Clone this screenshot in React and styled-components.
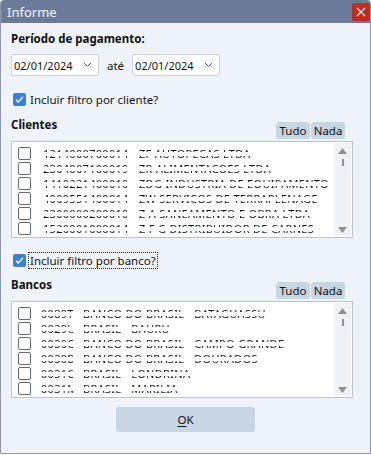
import React, { useState } from "react";
import styled, { createGlobalStyle } from "styled-components";

const GlobalStyle = createGlobalStyle`
  body {
    margin: 0;
    background: #ffffff;
    font-family: "Noto Sans", "Open Sans", sans-serif;
  }
`;

// components
const Window = styled.div`
  width: 371px;
  height: 454px;
  box-sizing: border-box;
  border: 1px solid #8e98aa;
  border-top: none;
  border-radius: 4px 4px 2px 2px;
  background: #eef3fa;
  display: flex;
  flex-direction: column;
  overflow: hidden;
`;

const TitleBar = styled.div`
  height: 23px;
  flex: none;
  background: #6b7a99;
  display: flex;
  align-items: center;
  justify-content: space-between;
  padding: 0 1px 0 7px;
  border-radius: 4px 4px 0 0;
  margin: 0 -1px;
`;

const Title = styled.span`
  color: #f2f4f8;
  font-size: 13px;
`;

const CloseButton = styled.button`
  width: 18px;
  height: 18px;
  padding: 0;
  border: none;
  border-radius: 2px;
  background: #c42b1c;
  display: flex;
  align-items: center;
  justify-content: center;
  margin-top: 1px;
`;

const Body = styled.div`
  display: flex;
  flex-direction: column;
  padding: 7px 17px 0 10px;
`;

const Heading = styled.div`
  font-weight: 700;
  font-size: 11.5px;
  color: #111;
  line-height: 16px;
`;

const DateRow = styled.div`
  display: flex;
  align-items: center;
  gap: 8px;
  margin-top: 7px;
`;

const DateBox = styled.div`
  width: 88px;
  height: 22px;
  box-sizing: border-box;
  background: #fff;
  border: 1px solid #c9d0da;
  border-radius: 2px;
  display: flex;
  align-items: center;
  justify-content: space-between;
  padding: 0 6px 0 2px;
  font-size: 11px;
  color: #111;
`;

const Label = styled.span`
  font-size: 11.5px;
  color: #111;
`;

const CheckRow = styled.label`
  display: flex;
  align-items: center;
  gap: 3px;
  margin-top: ${p => p.$top}px;
  margin-left: 2px;
  font-size: 11.5px;
  color: #111;
`;

const CheckText = styled.span`
  line-height: 15px;
  padding: 0 1px;
  outline: ${p => (p.$focus ? "1px dotted #222" : "none")};
`;

const Check = styled.span`
  width: 13px;
  height: 13px;
  box-sizing: border-box;
  border-radius: 2px;
  flex: none;
  display: flex;
  align-items: center;
  justify-content: center;
  background: ${p => (p.$on ? "#3b7fd6" : "#fff")};
  border: 1px solid ${p => (p.$on ? "#3b7fd6" : "#5d6880")};
`;

const SectionHead = styled.div`
  display: flex;
  justify-content: space-between;
  align-items: flex-start;
  margin-top: ${p => p.$top}px;
  height: 24px;
`;

const ButtonGroup = styled.div`
  display: flex;
  gap: 1px;
  margin: 5px 8px 0 0;
`;

const SmallButton = styled.button`
  height: 17px;
  width: 34px;
  padding: 0;
  border: none;
  border-radius: 3px;
  background: #c8d5e3;
  font-family: inherit;
  font-size: 11.5px;
  color: #111;
  line-height: 17px;
`;

const ListBox = styled.div`
  height: 97px;
  box-sizing: border-box;
  background: #fff;
  border: 1px solid #b9c3d3;
  display: flex;
  overflow: hidden;
`;

const Rows = styled.div`
  flex: 1;
  min-width: 0;
  padding: 4px 0 0 6px;
  display: flex;
  flex-direction: column;
`;

const Row = styled.div`
  height: 15px;
  display: flex;
  align-items: center;
  gap: ${p => p.$gap}px;
  flex: none;
`;

const Cell = styled.span`
  font-size: 11px;
  letter-spacing: 0.3px;
  white-space: nowrap;
  flex: none;
  width: ${p => (p.$w ? p.$w + "px" : "auto")};
  background: linear-gradient(
    to bottom,
    transparent 0 30%,
    #1a1a1a 30% 42%,
    transparent 42% 66%,
    #1a1a1a 66% 78%,
    transparent 78%
  );
  -webkit-background-clip: text;
  background-clip: text;
  color: transparent;
`;

const ScrollBar = styled.div`
  width: 17px;
  flex: none;
  background: #eef2f8;
  display: flex;
  flex-direction: column;
  align-items: center;
  padding: 5px 0 3px;
  margin: 1px 1px 1px 0;
`;

const Thumb = styled.div`
  width: 2px;
  height: 7px;
  background: #8c93a0;
  margin-top: 5px;
  flex: none;
`;

const Spacer = styled.div`
  flex: 1;
`;

const Footer = styled.div`
  display: flex;
  justify-content: center;
  margin-top: 9px;
  padding-left: 7px;
`;

const OkButton = styled.button`
  width: 139px;
  height: 25px;
  border: none;
  border-radius: 3px;
  background: #c8d5e3;
  font-family: inherit;
  font-size: 11.5px;
  color: #111;
  u {
    text-decoration: underline;
    text-underline-offset: 2px;
  }
`;

const CheckMark = () => (
  <svg width="11" height="11" viewBox="0 0 11 11">
    <path d="M2 5.8 L4.3 8 L9 2.8" fill="none" stroke="#fff" strokeWidth="1.3" />
  </svg>
);

const Chevron = () => (
  <svg width="9" height="6" viewBox="0 0 9 6">
    <path d="M1 1 L4.5 4.5 L8 1" fill="none" stroke="#555" strokeWidth="1" />
  </svg>
);

const Scroll = () => (
  <ScrollBar>
    <svg width="9" height="6" viewBox="0 0 9 6">
      <path d="M0 6 L4.5 0 L9 6 Z" fill="#8a909c" />
    </svg>
    <Thumb />
    <Spacer />
    <svg width="9" height="6" viewBox="0 0 9 6">
      <path d="M0 0 L4.5 6 L9 0 Z" fill="#8a909c" />
    </svg>
  </ScrollBar>
);

const clientes = [
  ["12140007000147", "ZF AUTOPECAS LTDA"],
  ["23040071000191", "ZR ALIMENTACOES LTDA"],
  ["14102214000100", "ZDG INDUSTRIA DE EQUIPAMENTO"],
  ["40095514000145", "ZW SERVICOS DE TERRAPLENAGE"],
  ["23000002000102", "Z A SANEAMENTO E OBRA LTDA"],
  ["15200010000140", "Z F G DISTRIBUIDOR DE CARNES"],
  ["x", ""],
];

const bancos = [
  ["0089T", "BANCO DO BRASIL", "BATAGUASSU"],
  ["0029U", "BRASIL", "BAURU"],
  ["0030C", "BANCO DO BRASIL", "CAMPO GRANDE"],
  ["0030D", "BANCO DO BRASIL", "DOURADOS"],
  ["0031O", "BRASIL", "LONDRINA"],
  ["0031M", "BRASIL", "MARILIA"],
  ["x", "", ""],
];

function App() {
  // states
  const [porCliente, setPorCliente] = useState(true);
  const [porBanco, setPorBanco] = useState(true);

  return (
    <>
      <GlobalStyle />
      <Window>
        <TitleBar>
          <Title>Informe</Title>
          <CloseButton>
            <svg width="10" height="10" viewBox="0 0 10 10">
              <path d="M1 1 L9 9 M9 1 L1 9" stroke="#fff" strokeWidth="1.1" />
            </svg>
          </CloseButton>
        </TitleBar>
        <Body>
          <Heading style={{ marginTop: 1 }}>Período de pagamento:</Heading>
          <DateRow>
            <DateBox>
              02/01/2024
              <Chevron />
            </DateBox>
            <Label>até</Label>
            <DateBox>
              02/01/2024
              <Chevron />
            </DateBox>
          </DateRow>
          <CheckRow $top={16} onClick={() => setPorCliente(!porCliente)}>
            <Check $on={porCliente}>{porCliente && <CheckMark />}</Check>
            <CheckText>Incluir filtro por cliente?</CheckText>
          </CheckRow>
          <SectionHead $top={10}>
            <Heading>Clientes</Heading>
            <ButtonGroup>
              <SmallButton>Tudo</SmallButton>
              <SmallButton>Nada</SmallButton>
            </ButtonGroup>
          </SectionHead>
          <ListBox>
            <Rows>
              {clientes.map(c => (
                <Row key={c[0]} $gap={12}>
                  <Check />
                  {c[1] && <Cell $w={84}>{c[0]}</Cell>}
                  {c[1] && <Cell>{c[1]}</Cell>}
                </Row>
              ))}
            </Rows>
            <Scroll />
          </ListBox>
          <CheckRow $top={15} onClick={() => setPorBanco(!porBanco)}>
            <Check $on={porBanco}>{porBanco && <CheckMark />}</Check>
            <CheckText $focus>Incluir filtro por banco?</CheckText>
          </CheckRow>
          <SectionHead $top={9}>
            <Heading>Bancos</Heading>
            <ButtonGroup>
              <SmallButton>Tudo</SmallButton>
              <SmallButton>Nada</SmallButton>
            </ButtonGroup>
          </SectionHead>
          <ListBox>
            <Rows>
              {bancos.map(b => (
                <Row key={b[0]} $gap={10}>
                  <Check />
                  {b[1] && <Cell $w={32}>{b[0]}</Cell>}
                  {b[1] && <Cell>{b[1]}</Cell>}
                  {b[1] && <Cell>{b[2]}</Cell>}
                </Row>
              ))}
            </Rows>
            <Scroll />
          </ListBox>
          <Footer>
            <OkButton>
              <u>O</u>K
            </OkButton>
          </Footer>
        </Body>
      </Window>
    </>
  );
}

export default App;
